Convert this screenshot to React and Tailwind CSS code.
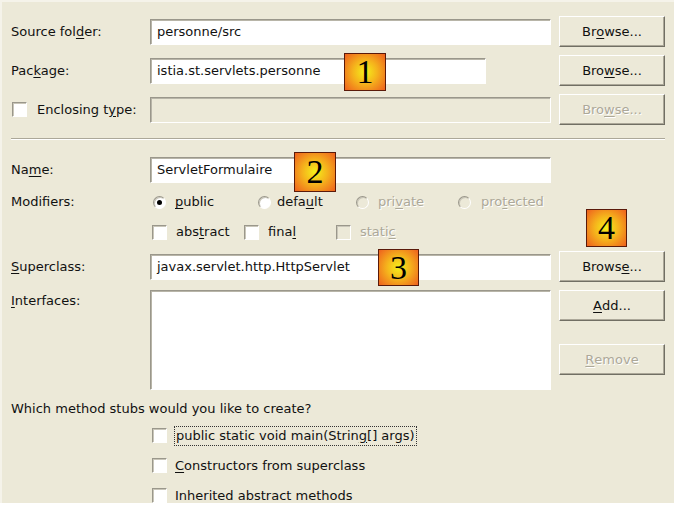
import React from "react";

const font = { fontFamily: '"DejaVu Sans", Verdana, sans-serif' };

function U({ children }) {
  return <span className="underline underline-offset-2">{children}</span>;
}

function Field({ w = "w-[401px]", h = "h-[26px]", children }) {
  return (
    <div
      className={`${w} ${h} bg-white border border-t-[#9a978b] border-l-[#9a978b] border-r-white border-b-white shadow-[inset_1px_1px_0_#b8b5a8] flex items-center pl-[6px] text-[13px] text-[#111]`}
    >
      {children}
    </div>
  );
}

function DisabledField() {
  return (
    <div className="w-[401px] h-[26px] bg-[#ECE9D8] border border-t-[#9a978b] border-l-[#9a978b] border-r-white border-b-white shadow-[inset_1px_1px_0_#b8b5a8]" />
  );
}

function Button({ children, disabled }) {
  return (
    <div
      className={`w-[106px] h-[31px] flex items-center justify-center bg-[#ECE9D8] border border-t-white border-l-white border-r-[#716f64] border-b-[#716f64] shadow-[inset_-1px_-1px_0_#aca899] text-[13px] ${
        disabled ? "text-[#aca899] [text-shadow:1px_1px_0_#fff]" : "text-[#111]"
      }`}
    >
      {children}
    </div>
  );
}

function Check({ disabled }) {
  return (
    <div
      className={`w-[15px] h-[15px] shrink-0 border border-t-[#9a978b] border-l-[#9a978b] border-r-white border-b-white shadow-[inset_1px_1px_0_#c9c6b9] ${
        disabled ? "bg-[#ECE9D8]" : "bg-white"
      }`}
    />
  );
}

function Radio({ checked, disabled }) {
  return (
    <div
      className={`w-[13px] h-[13px] shrink-0 rounded-full border border-t-[#9a978b] border-l-[#9a978b] border-r-white border-b-white shadow-[inset_1px_1px_0_#c9c6b9] flex items-center justify-center ${
        disabled ? "bg-[#ECE9D8]" : "bg-white"
      }`}
    >
      {checked && <div className="w-[5px] h-[5px] rounded-full bg-black" />}
    </div>
  );
}

function Num({ n, className }) {
  return (
    <div
      className={`absolute flex items-center justify-center border border-[#5a1a0a] bg-[radial-gradient(circle,#f4f01a_0%,#f5b31c_45%,#ee601e_100%)] text-black text-[34px] leading-none ${className}`}
      style={{ fontFamily: '"Liberation Serif", "Times New Roman", serif' }}
    >
      {n}
    </div>
  );
}

export default function App() {
  const dis = "text-[#aca899] [text-shadow:1px_1px_0_#fff]";
  return (
    <div className="w-[683px] h-[507px] bg-white relative" style={font}>
      <div className="w-[674px] h-[503px] bg-[#ECE9D8] border-t-2 border-l-2 border-[#f5f3ea] pl-[9px] pr-[9px] flex flex-col text-[13px] text-[#111] overflow-hidden">
        {/* Row 1 */}
        <div className="flex items-center h-[31px] mt-[14px]">
          <div className="w-[139px]">
            Source fol<U>d</U>er:
          </div>
          <Field>personne/src</Field>
          <div className="ml-[8px]">
            <Button>
              Br<U>o</U>wse...
            </Button>
          </div>
        </div>
        {/* Row 2 */}
        <div className="flex items-center h-[31px] mt-[8px]">
          <div className="w-[139px]">
            Pac<U>k</U>age:
          </div>
          <Field w="w-[336px]">istia.st.servlets.personne</Field>
          <div className="ml-[73px]">
            <Button>
              Bro<U>w</U>se...
            </Button>
          </div>
        </div>
        {/* Row 3 */}
        <div className="flex items-center h-[31px] mt-[8px]">
          <div className="w-[139px] flex items-center gap-[10px] pl-[1px]">
            <Check />
            <span>
              Enclosing t<U>y</U>pe:
            </span>
          </div>
          <DisabledField />
          <div className="ml-[8px]">
            <Button disabled>
              Bro<U>w</U>se...
            </Button>
          </div>
        </div>
        {/* Separator */}
        <div className="mt-[13px] w-[654px] border-t border-b border-t-[#aca899] border-b-white" />
        {/* Name */}
        <div className="flex items-center h-[31px] mt-[14px]">
          <div className="w-[139px]">
            Na<U>m</U>e:
          </div>
          <Field>ServletFormulaire</Field>
        </div>
        {/* Modifiers */}
        <div className="flex items-center h-[26px] mt-[4px]">
          <div className="w-[142px]">Modifiers:</div>
          <div className="w-[105px] flex items-center gap-[9px]">
            <Radio checked />
            <span>
              <U>p</U>ublic
            </span>
          </div>
          <div className="w-[98px] flex items-center gap-[6px]">
            <Radio />
            <span>
              defa<U>u</U>lt
            </span>
          </div>
          <div className="w-[102px] flex items-center gap-[9px]">
            <Radio disabled />
            <span className={dis}>
              pri<U>v</U>ate
            </span>
          </div>
          <div className="flex items-center gap-[10px]">
            <Radio disabled />
            <span className={dis}>
              pro<U>t</U>ected
            </span>
          </div>
        </div>
        {/* Checkboxes */}
        <div className="flex items-center h-[26px] mt-[4px] pl-[141px]">
          <div className="w-[92px] flex items-center gap-[9px]">
            <Check />
            <span>
              abs<U>t</U>ract
            </span>
          </div>
          <div className="w-[92px] flex items-center gap-[9px]">
            <Check />
            <span>
              fina<U>l</U>
            </span>
          </div>
          <div className="flex items-center gap-[9px]">
            <Check disabled />
            <span className={dis}>
              stati<U>c</U>
            </span>
          </div>
        </div>
        {/* Superclass */}
        <div className="flex items-center h-[31px] mt-[6px]">
          <div className="w-[139px]">
            <U>S</U>uperclass:
          </div>
          <Field>javax.servlet.http.HttpServlet</Field>
          <div className="ml-[8px]">
            <Button>
              Brows<U>e</U>...
            </Button>
          </div>
        </div>
        {/* Interfaces */}
        <div className="flex items-start mt-[8px]">
          <div className="w-[139px] pt-[1px]">
            <U>I</U>nterfaces:
          </div>
          <div className="w-[401px] h-[100px] bg-white border border-t-[#9a978b] border-l-[#9a978b] border-r-white border-b-white shadow-[inset_1px_1px_0_#b8b5a8]" />
          <div className="ml-[8px] flex flex-col gap-[23px]">
            <Button>
              <U>A</U>dd...
            </Button>
            <Button disabled>
              <U>R</U>emove
            </Button>
          </div>
        </div>
        {/* Stubs */}
        <div className="mt-[10px] leading-[18px]">
          Which method stubs would you like to create?
        </div>
        <div className="flex flex-col pl-[141px] mt-[10px] gap-[15px]">
          <div className="flex items-center gap-[7px] h-[15px]">
            <Check />
            <span className="border border-dotted border-[#333] px-[1px] leading-[18px]">
              public static void main(Strin<U>g</U>[] args)
            </span>
          </div>
          <div className="flex items-center gap-[8px] h-[15px]">
            <Check />
            <span>
              <U>C</U>onstructors from superclass
            </span>
          </div>
          <div className="flex items-center gap-[8px] h-[15px]">
            <Check />
            <span>Inherited abstract methods</span>
          </div>
        </div>
      </div>
      <Num n="1" className="left-[344px] top-[53px] w-[42px] h-[38px]" />
      <Num n="2" className="left-[294px] top-[152px] w-[42px] h-[40px]" />
      <Num n="3" className="left-[378px] top-[249px] w-[41px] h-[37px]" />
      <Num n="4" className="left-[586px] top-[209px] w-[41px] h-[38px]" />
    </div>
  );
}
